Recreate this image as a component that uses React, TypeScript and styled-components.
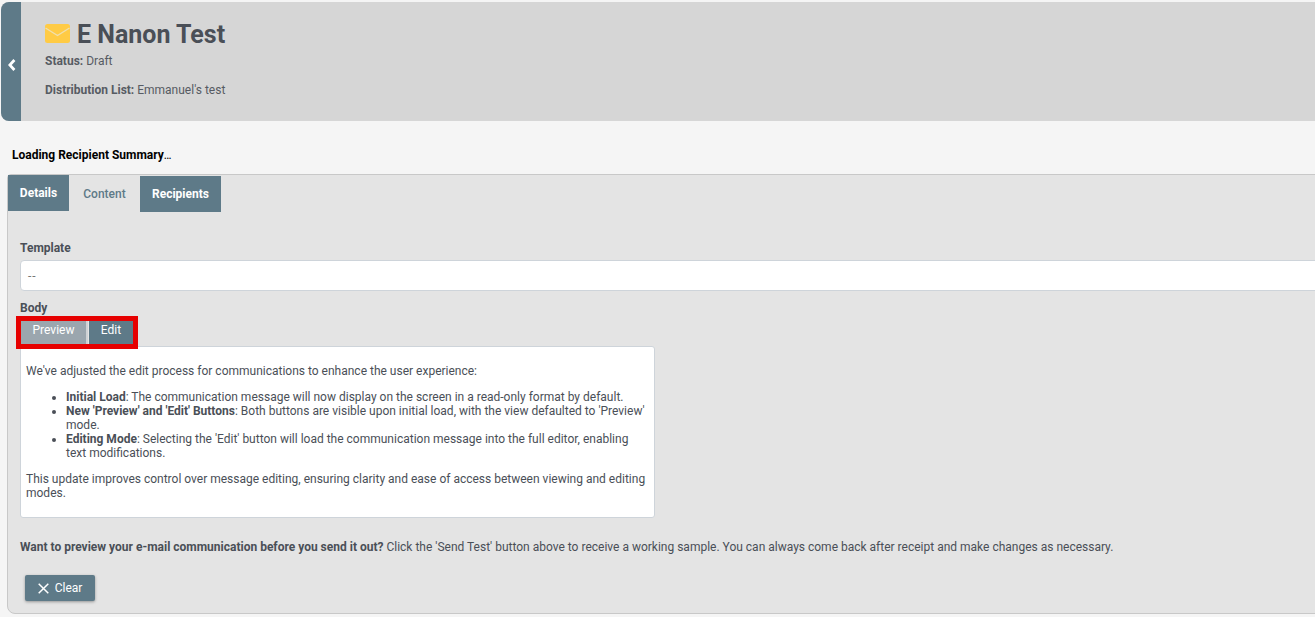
import React from "react";
import styled, { createGlobalStyle } from "styled-components";

const Global = createGlobalStyle`
  html, body { margin: 0; padding: 0; background: #f5f5f5; }
  body { font-family: Roboto, "Liberation Sans", sans-serif; font-size: 12px; color: #4a4f57; overflow: hidden; }
  #root { width: 1315px; height: 617px; overflow: hidden; }
`;

const Page = styled.div`
  display: flex;
  flex-direction: column;
  width: 1315px;
  height: 617px;
  padding: 2px 0 0 1px;
  box-sizing: border-box;
`;

const Header = styled.header`
  display: flex;
  height: 119px;
  flex: none;
  background: #d6d6d6;
  border-radius: 8px 0 0 8px;
  overflow: hidden;
`;

const BackBar = styled.div`
  width: 20px;
  flex: none;
  background: #5e7a88;
  display: flex;
  align-items: center;
  justify-content: center;
  padding: 7px 0 0 2px;
  box-sizing: border-box;
`;

const HeaderBody = styled.div`
  padding: 19px 0 0 24px;
`;

const TitleRow = styled.h1`
  margin: 0;
  display: flex;
  align-items: flex-start;
  gap: 7px;
  font-size: 25px;
  line-height: 28px;
  font-weight: 700;
  color: #4a4f57;
  svg { margin-top: 3px; flex: none; }
`;

const MetaLine = styled.div<{ $top: number }>`
  margin-top: ${(p) => p.$top}px;
  font-size: 12px;
  line-height: 14px;
  color: #565b63;
  b { font-weight: 700; }
`;

const Loading = styled.div`
  margin: 27px 0 0 11px;
  font-size: 12px;
  line-height: 14px;
  font-weight: 700;
  color: #000;
  flex: none;
  span { font-weight: 400; letter-spacing: -0.8px; }
`;

const Panel = styled.section`
  margin: 12px -40px 0 6px;
  height: 440px;
  flex: none;
  box-sizing: border-box;
  background: #e4e4e4;
  border: 1px solid #c8c8c8;
  border-radius: 4px 0 0 8px;
`;

const Tabs = styled.div`
  display: flex;
  align-items: flex-start;
  height: 37px;
`;

const Tab = styled.div<{ $w: number; $h: number; $active?: boolean; $mt?: number }>`
  width: ${(p) => p.$w}px;
  height: ${(p) => p.$h}px;
  margin-top: ${(p) => p.$mt ?? 0}px;
  display: flex;
  align-items: center;
  justify-content: center;
  font-size: 12px;
  font-weight: ${(p) => (p.$active ? 500 : 700)};
  color: ${(p) => (p.$active ? "#5e7a88" : "#fff")};
  background: ${(p) => (p.$active ? "transparent" : "#5e7a88")};
`;

const Content = styled.div`
  padding: 29px 0 0 12px;
`;

const Label = styled.div`
  font-size: 12px;
  line-height: 14px;
  font-weight: 700;
  color: #4a4f57;
`;

const SelectBox = styled.div`
  margin-top: 5px;
  height: 31px;
  box-sizing: border-box;
  background: #fff;
  border: 1px solid #ced4da;
  border-radius: 4px;
  padding-left: 7px;
  display: flex;
  align-items: center;
  font-size: 12px;
  letter-spacing: 1px;
  color: #777;
`;

const BodyLabel = styled(Label)`
  margin-top: 10px;
`;

const ToggleRow = styled.div`
  position: relative;
  display: flex;
  height: 23px;
  padding: 6px 0 0 1px;
`;

const ToggleButton = styled.div<{ $w: number; $muted?: boolean }>`
  width: ${(p) => p.$w}px;
  height: 23px;
  display: flex;
  align-items: center;
  justify-content: center;
  padding-bottom: 5px;
  box-sizing: border-box;
  font-size: 12px;
  font-weight: 400;
  color: #fff;
  background: ${(p) => (p.$muted ? "#9ba6ae" : "#5e7a88")};
  margin-right: ${(p) => (p.$muted ? 3 : 0)}px;
  box-shadow: ${(p) => (p.$muted ? "2px 0 0 #cfd2d5" : "none")};
`;

const Highlight = styled.div`
  position: absolute;
  left: -4px;
  top: 1px;
  width: 122px;
  height: 33px;
  box-sizing: border-box;
  border: 5px solid #e60000;
  pointer-events: none;
`;

const Message = styled.div`
  margin-top: 2px;
  width: 635px;
  height: 172px;
  box-sizing: border-box;
  background: #fff;
  border: 1px solid #ced4da;
  border-radius: 3px;
  padding: 17px 5px 0;
  font-size: 12px;
  line-height: 14px;
  color: #4a4f57;
  p { margin: 0; }
  ul { margin: 12px 0; padding-left: 40px; }
  b { font-weight: 700; }
`;

const Hint = styled.p`
  margin: 22px 0 0;
  font-size: 12px;
  line-height: 14px;
  color: #4a4f57;
  b { font-weight: 700; }
`;

const ClearButton = styled.div`
  margin: 21px 0 0 5px;
  width: 70px;
  height: 26px;
  display: flex;
  align-items: center;
  justify-content: center;
  gap: 6px;
  background: #5e7a88;
  color: #fff;
  font-size: 12px;
  font-weight: 400;
  border-radius: 2px;
  box-shadow: 0 1px 3px rgba(0, 0, 0, 0.35);
`;

const Envelope = () => (
  <svg width="25" height="19" viewBox="0 0 25 19">
    <rect width="25" height="19" rx="2.5" fill="#ffcb45" />
    <path d="M0.5 4 L12.5 11.5 L24.5 4" fill="none" stroke="#f0dfae" strokeWidth="1.4" />
  </svg>
);

const Chevron = () => (
  <svg width="8" height="12" viewBox="0 0 8 12">
    <path d="M6.4 1 L1.8 6 L6.4 11" fill="none" stroke="#fff" strokeWidth="2.8" />
  </svg>
);

const Cross = () => (
  <svg width="11" height="11" viewBox="0 0 11 11">
    <path d="M0.7 0.7 L10.3 10.3 M10.3 0.7 L0.7 10.3" stroke="#fff" strokeWidth="1.5" fill="none" />
  </svg>
);

export default function App() {
  return (
    <Page>
      <Global />
      <Header>
        <BackBar>
          <Chevron />
        </BackBar>
        <HeaderBody>
          <TitleRow>
            <Envelope />
            E Nanon Test
          </TitleRow>
          <MetaLine $top={5}>
            <b>Status:</b> Draft
          </MetaLine>
          <MetaLine $top={15}>
            <b>Distribution List:</b> Emmanuel's test
          </MetaLine>
        </HeaderBody>
      </Header>
      <Loading>
        Loading Recipient Summary<span>...</span>
      </Loading>
      <Panel>
        <Tabs>
          <Tab $w={61} $h={36}>Details</Tab>
          <Tab $w={71} $h={36} $active $mt={1}>Content</Tab>
          <Tab $w={81} $h={36} $mt={1}>Recipients</Tab>
        </Tabs>
        <Content>
          <Label>Template</Label>
          <SelectBox>--</SelectBox>
          <BodyLabel>Body</BodyLabel>
          <ToggleRow>
            <ToggleButton $w={65} $muted>Preview</ToggleButton>
            <ToggleButton $w={44}>Edit</ToggleButton>
            <Highlight />
          </ToggleRow>
          <Message>
            <p>We've adjusted the edit process for communications to enhance the user experience:</p>
            <ul>
              <li><b>Initial Load</b>: The communication message will now display on the screen in a read-only format by default.</li>
              <li><b>New 'Preview' and 'Edit' Buttons</b>: Both buttons are visible upon initial load, with the view defaulted to 'Preview' mode.</li>
              <li><b>Editing Mode</b>: Selecting the 'Edit' button will load the communication message into the full editor, enabling text modifications.</li>
            </ul>
            <p>This update improves control over message editing, ensuring clarity and ease of access between viewing and editing modes.</p>
          </Message>
          <Hint>
            <b>Want to preview your e-mail communication before you send it out?</b> Click the 'Send Test' button above to receive a working sample. You can always come back after receipt and make changes as necessary.
          </Hint>
          <ClearButton>
            <Cross />
            Clear
          </ClearButton>
        </Content>
      </Panel>
    </Page>
  );
}
